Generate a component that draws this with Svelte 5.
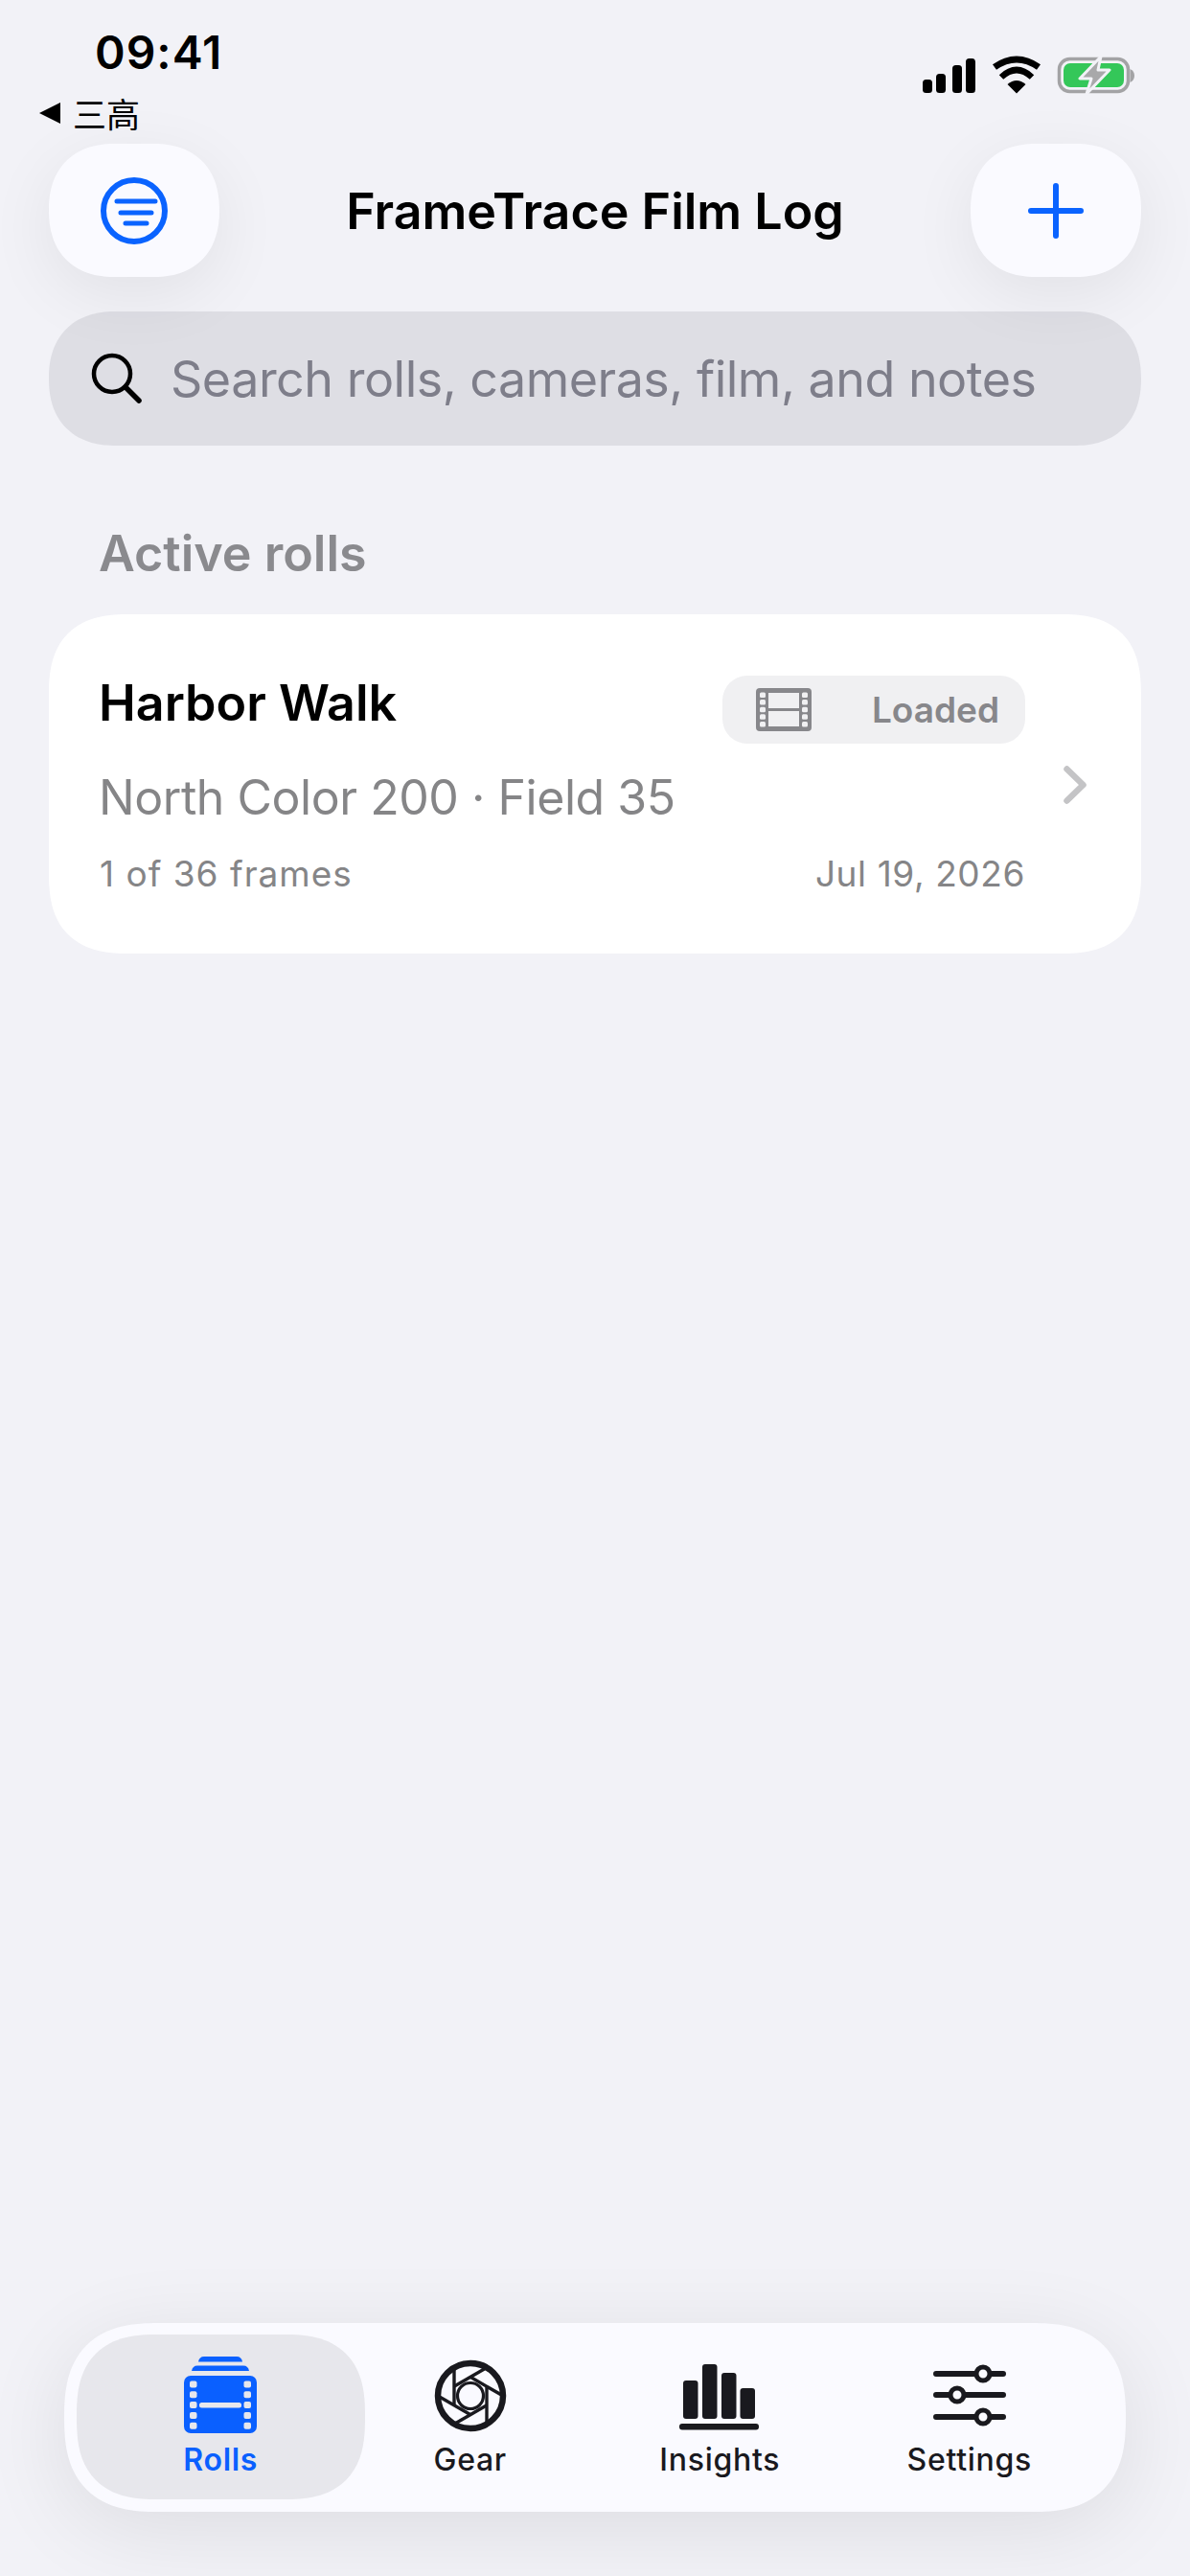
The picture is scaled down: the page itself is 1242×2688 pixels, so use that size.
<script>
  const holes = [0, 1, 2, 3, 4];
  const blades = [0, 60, 120, 180, 240, 300];
</script>

<div class="page">
  <div class="status">
    <div class="status-left">
      <div class="time">09:41</div>
      <div class="back"><span class="tri"></span><span class="back-label">三高</span></div>
    </div>
    <svg class="status-icons" width="222" height="42" viewBox="962 58 222 42">
      <rect x="963" y="83" width="10" height="14" rx="3.5" />
      <rect x="977" y="77" width="10" height="20" rx="3.5" />
      <rect x="994" y="68" width="10" height="29" rx="3.5" />
      <rect x="1008" y="61" width="10" height="36" rx="3.5" />
      <g transform="translate(1035 58)">
        <path d="M26 39.5 L16.5 30 Q26 22 35.5 30 Z" />
        <path d="M10 22.5 Q26 7.5 42 22.5" fill="none" stroke="#000" stroke-width="6.5" />
        <path d="M3 12 Q26 -4 49 12" fill="none" stroke="#000" stroke-width="7" />
      </g>
      <rect x="1105.5" y="61.5" width="72" height="34" rx="11" fill="none" stroke="#a3a3a5" stroke-width="3.5" />
      <rect x="1110" y="66" width="63" height="25" rx="7" fill="#34c759" />
      <path d="M1179.5 72 Q1184 74 1184 79 Q1184 84 1179.5 86 Z" fill="#a3a3a5" />
      <path d="M1149 59 L1127 82 H1139 L1134 98 L1158 73 H1146 Z" fill="#a8a8aa" stroke="#f2f2f7" stroke-width="3" stroke-linejoin="round" />
    </svg>
  </div>

  <header class="header">
    <button class="round" aria-label="Filter">
      <svg width="72" height="72" viewBox="0 0 72 72" fill="none" stroke="#0a63ff">
        <circle cx="36" cy="36" r="32" stroke-width="6" />
        <path d="M18 26H58M22 38H54M27 49H49" stroke-width="5" stroke-linecap="round" />
      </svg>
    </button>
    <h1>FrameTrace Film Log</h1>
    <button class="round" aria-label="Add">
      <svg width="60" height="60" viewBox="0 0 60 60" fill="none" stroke="#0a63ff" stroke-width="6" stroke-linecap="round">
        <path d="M30 4V56M4 30H56" />
      </svg>
    </button>
  </header>

  <div class="search">
    <svg width="54" height="54" viewBox="0 0 54 54" fill="none" stroke="#000">
      <circle cx="22" cy="22" r="19" stroke-width="4.5" />
      <path d="M36 36L50 50" stroke-width="5.5" stroke-linecap="round" />
    </svg>
    <span class="placeholder">Search rolls, cameras, film, and notes</span>
  </div>

  <h2>Active rolls</h2>

  <article class="card">
    <div class="card-body">
      <div class="row-top">
        <div class="roll-name">Harbor Walk</div>
        <div class="badge">
          <svg width="58" height="45" viewBox="0 0 58 45">
            <rect width="58" height="45" rx="4" fill="#87878b" />
            <rect x="13" y="5" width="32" height="16" fill="#f0f0f2" />
            <rect x="13" y="24" width="32" height="16" fill="#f0f0f2" />
            {#each holes as h}
              <rect x="4" y={4.5 + h * 7.6} width="6" height="5.5" rx="1.5" fill="#f0f0f2" />
              <rect x="48" y={4.5 + h * 7.6} width="6" height="5.5" rx="1.5" fill="#f0f0f2" />
            {/each}
          </svg>
          <span>Loaded</span>
        </div>
      </div>
      <div class="stock">North Color 200 · Field 35</div>
      <div class="row-meta"><span class="frames">1 of 36 frames</span><span class="date">Jul 19, 2026</span></div>
    </div>
    <svg class="chev" width="24" height="40" viewBox="0 0 24 40" fill="none" stroke="#c4c4c6" stroke-width="6.5" stroke-linecap="round" stroke-linejoin="round">
      <path d="M3.5 3.5L20.5 20L3.5 36.5" />
    </svg>
  </article>

  <nav class="nav">
    <div class="item active">
      <svg width="76" height="80" viewBox="0 0 76 80" fill="#0a60ff">
        <path d="M15 5.5Q16 0 21 0H55Q60 0 61 5.5Z" />
        <path d="M8 15Q9 9.5 14 9.5H62Q67 9.5 68 15Z" />
        <rect y="20" width="76" height="60" rx="7" />
        {#each holes as h}
          <rect x="6" y={25.5 + h * 10.8} width="7.5" height="7" rx="2" fill="#e7e7ec" />
          <rect x="62.5" y={25.5 + h * 10.8} width="7.5" height="7" rx="2" fill="#e7e7ec" />
        {/each}
        <rect x="16" y="48" width="44" height="5.5" rx="2.5" fill="#e7e7ec" />
      </svg>
      <span>Rolls</span>
    </div>
    <div class="item">
      <svg width="76" height="80" viewBox="-38 -41 76 80" fill="none" stroke="#19191e">
        <circle r="34" stroke-width="6.5" />
        <circle r="13.5" stroke-width="3.2" />
        {#each blades as a}
          <path d="M17 -10V30" stroke-width="3.4" transform="rotate({a})" />
        {/each}
      </svg>
      <span>Gear</span>
    </div>
    <div class="item">
      <svg width="84" height="80" viewBox="0 -8 84 80" fill="#19191e">
        <rect x="4" y="17" width="15.5" height="40" rx="3" />
        <rect x="24" y="0" width="15.5" height="57" rx="3" />
        <rect x="44" y="9" width="15.5" height="48" rx="3" />
        <rect x="63.5" y="25" width="15.5" height="32" rx="3" />
        <rect y="62" width="83" height="6.5" rx="3" />
      </svg>
      <span>Insights</span>
    </div>
    <div class="item">
      <svg width="76" height="80" viewBox="0 -7 76 80" fill="none" stroke="#19191e" stroke-width="6" stroke-linecap="round">
        <path d="M3 11H73M3 33H73M3 56H73" />
        <g fill="#fafaff" stroke-width="5">
          <circle cx="52" cy="11" r="7" />
          <circle cx="25" cy="33" r="7" />
          <circle cx="52" cy="56" r="7" />
        </g>
      </svg>
      <span>Settings</span>
    </div>
  </nav>
</div>

<style>
  :global(body) {
    margin: 0;
    background: #f2f2f7;
  }
  .page {
    width: 1242px;
    height: 2688px;
    box-sizing: border-box;
    display: flex;
    flex-direction: column;
    background: #f2f2f7;
    font-family: Inter, "Noto Sans", sans-serif;
    color: #000;
    overflow: hidden;
  }
  .status {
    height: 150px;
    flex: none;
    display: flex;
    justify-content: space-between;
    padding: 26px 58px 0 41px;
    box-sizing: border-box;
  }
  .time {
    margin-left: 58px;
    font-size: 48px;
    line-height: 58px;
    font-weight: 600;
    letter-spacing: 1px;
  }
  .back {
    display: flex;
    align-items: center;
    gap: 13px;
    margin-top: 16px;
    height: 36px;
  }
  .tri {
    width: 0;
    height: 0;
    border-right: 22px solid #000;
    border-top: 11px solid transparent;
    border-bottom: 11px solid transparent;
  }
  .back-label {
    font-family: "Noto Sans CJK SC", sans-serif;
    font-size: 35px;
    line-height: 36px;
  }
  .status-icons {
    margin-top: 32px;
  }
  .header {
    height: 139px;
    flex: none;
    display: flex;
    align-items: center;
    justify-content: space-between;
    padding: 0 51px;
  }
  .round {
    width: 178px;
    height: 139px;
    border: 0;
    padding: 0;
    display: flex;
    align-items: center;
    justify-content: center;
    background: #fafaff;
    border-radius: 69.5px;
    corner-shape: superellipse(1.2);
    box-shadow: 0 18px 70px rgba(0, 0, 0, 0.07);
  }
  h1 {
    margin: 2px 0 0;
    font-size: 52px;
    line-height: 62px;
    font-weight: 600;
  }
  .search {
    height: 140px;
    flex: none;
    margin: 36px 51px 0;
    display: flex;
    align-items: center;
    gap: 29px;
    padding-left: 44px;
    background: rgba(118, 118, 128, 0.16);
    border-radius: 70px;
    corner-shape: superellipse(1.2);
  }
  .placeholder {
    margin-top: 2px;
    font-size: 52px;
    line-height: 62px;
    letter-spacing: -0.5px;
    color: #7e7e8a;
  }
  h2 {
    margin: 83px 0 33px 103px;
    font-size: 52px;
    line-height: 60px;
    font-weight: 600;
    color: #8a8a8e;
  }
  .card {
    flex: none;
    margin: 0 51px;
    display: flex;
    align-items: center;
    gap: 40px;
    padding: 64px 57px 54px 52px;
    background: #fff;
    border-radius: 84px;
    corner-shape: superellipse(1.35);
  }
  .card-body {
    flex: 1;
    min-width: 0;
  }
  .row-top {
    display: flex;
    justify-content: space-between;
    align-items: flex-start;
    height: 71px;
  }
  .roll-name {
    font-size: 52px;
    line-height: 58px;
    font-weight: 600;
  }
  .badge {
    width: 316px;
    height: 71px;
    box-sizing: border-box;
    display: flex;
    align-items: center;
    justify-content: space-between;
    padding: 0 27px 0 35px;
    background: #f0f0f2;
    border-radius: 26px;
    font-size: 37px;
    font-weight: 600;
    color: #87878b;
  }
  .stock {
    margin-top: 26px;
    font-size: 50px;
    line-height: 60px;
    letter-spacing: -0.46px;
    color: #858587;
  }
  .row-meta {
    margin-top: 21px;
    display: flex;
    justify-content: space-between;
    font-size: 37px;
    line-height: 58px;
    color: #858587;
  }
  .frames {
    margin-left: 1px;
    letter-spacing: 1px;
  }
  .date {
    letter-spacing: 0.6px;
  }
  .chev {
    flex: none;
    margin-bottom: 8px;
  }
  .nav {
    margin: auto 67px 67px;
    height: 197px;
    flex: none;
    display: flex;
    box-sizing: border-box;
    padding: 0 33px;
    background: #fafaff;
    border-radius: 98px;
    corner-shape: superellipse(1.35);
    box-shadow: 0 18px 90px rgba(0, 0, 0, 0.09);
  }
  .item {
    position: relative;
    flex: 1;
    display: flex;
    flex-direction: column;
    align-items: center;
    justify-content: flex-end;
    padding-bottom: 34px;
    font-size: 32px;
    line-height: 40px;
    letter-spacing: 0.7px;
    font-weight: 450;
    color: #19191e;
  }
  .item svg,
  .item span {
    position: relative;
  }
  .item svg {
    margin-bottom: 8px;
  }
  .active {
    color: #0a60ff;
    font-weight: 600;
  }
  .active::before {
    content: "";
    position: absolute;
    inset: 12px -20px 13px -20px;
    background: #e7e7ec;
    border-radius: 84px;
    corner-shape: superellipse(1.35);
  }
</style>
